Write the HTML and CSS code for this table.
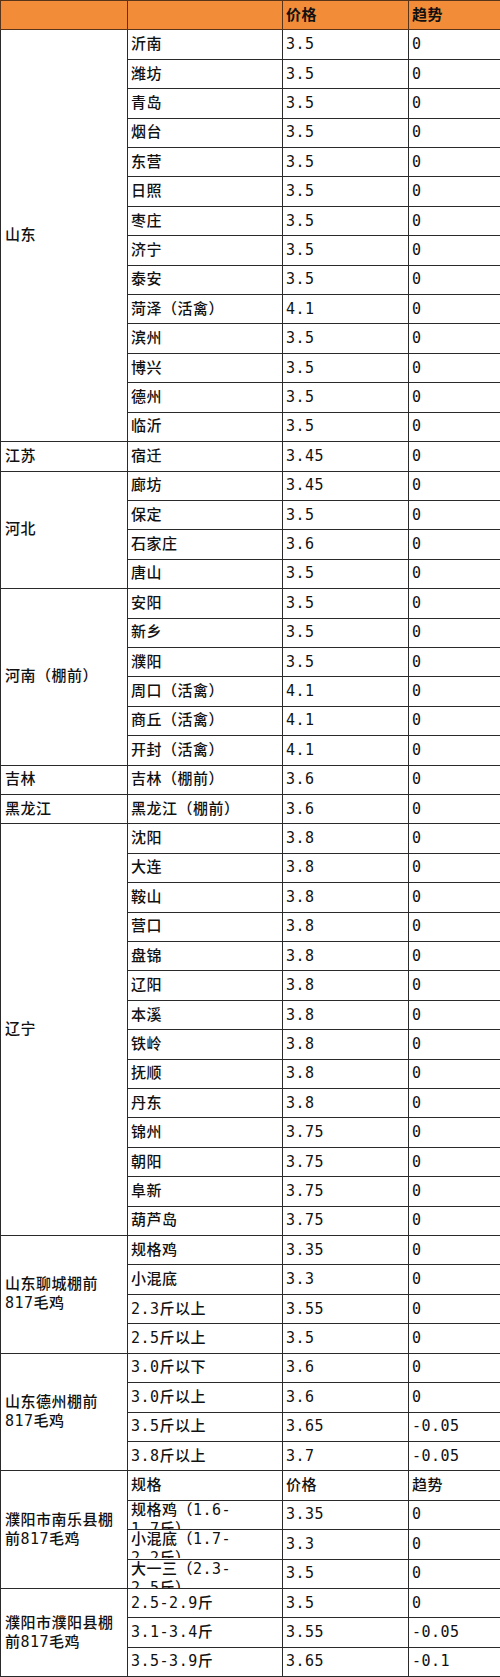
FILE: index.html
```html
<!DOCTYPE html>
<html lang="zh">
<head>
<meta charset="utf-8">
<title>毛鸡价格</title>
<link rel="stylesheet" href="styles.css">
</head>
<body>
<table class="price-table">
  <colgroup>
    <col class="c-region">
    <col class="c-place">
    <col class="c-price">
    <col class="c-trend">
  </colgroup>
  <thead>
    <tr class="head"><th></th><th></th><th>价格</th><th>趋势</th></tr>
  </thead>
  <tbody>
    <tr><td rowspan="14" class="region">山东</td><td>沂南</td><td>3.5</td><td>0</td></tr>
    <tr><td>潍坊</td><td>3.5</td><td>0</td></tr>
    <tr><td>青岛</td><td>3.5</td><td>0</td></tr>
    <tr><td>烟台</td><td>3.5</td><td>0</td></tr>
    <tr><td>东营</td><td>3.5</td><td>0</td></tr>
    <tr><td>日照</td><td>3.5</td><td>0</td></tr>
    <tr><td>枣庄</td><td>3.5</td><td>0</td></tr>
    <tr><td>济宁</td><td>3.5</td><td>0</td></tr>
    <tr><td>泰安</td><td>3.5</td><td>0</td></tr>
    <tr><td>菏泽（活禽）</td><td>4.1</td><td>0</td></tr>
    <tr><td>滨州</td><td>3.5</td><td>0</td></tr>
    <tr><td>博兴</td><td>3.5</td><td>0</td></tr>
    <tr><td>德州</td><td>3.5</td><td>0</td></tr>
    <tr><td>临沂</td><td>3.5</td><td>0</td></tr>

    <tr><td class="region">江苏</td><td>宿迁</td><td>3.45</td><td>0</td></tr>

    <tr><td rowspan="4" class="region">河北</td><td>廊坊</td><td>3.45</td><td>0</td></tr>
    <tr><td>保定</td><td>3.5</td><td>0</td></tr>
    <tr><td>石家庄</td><td>3.6</td><td>0</td></tr>
    <tr><td>唐山</td><td>3.5</td><td>0</td></tr>

    <tr><td rowspan="6" class="region">河南（棚前）</td><td>安阳</td><td>3.5</td><td>0</td></tr>
    <tr><td>新乡</td><td>3.5</td><td>0</td></tr>
    <tr><td>濮阳</td><td>3.5</td><td>0</td></tr>
    <tr><td>周口（活禽）</td><td>4.1</td><td>0</td></tr>
    <tr><td>商丘（活禽）</td><td>4.1</td><td>0</td></tr>
    <tr><td>开封（活禽）</td><td>4.1</td><td>0</td></tr>

    <tr><td class="region">吉林</td><td>吉林（棚前）</td><td>3.6</td><td>0</td></tr>
    <tr><td class="region">黑龙江</td><td>黑龙江（棚前）</td><td>3.6</td><td>0</td></tr>

    <tr><td rowspan="14" class="region">辽宁</td><td>沈阳</td><td>3.8</td><td>0</td></tr>
    <tr><td>大连</td><td>3.8</td><td>0</td></tr>
    <tr><td>鞍山</td><td>3.8</td><td>0</td></tr>
    <tr><td>营口</td><td>3.8</td><td>0</td></tr>
    <tr><td>盘锦</td><td>3.8</td><td>0</td></tr>
    <tr><td>辽阳</td><td>3.8</td><td>0</td></tr>
    <tr><td>本溪</td><td>3.8</td><td>0</td></tr>
    <tr><td>铁岭</td><td>3.8</td><td>0</td></tr>
    <tr><td>抚顺</td><td>3.8</td><td>0</td></tr>
    <tr><td>丹东</td><td>3.8</td><td>0</td></tr>
    <tr><td>锦州</td><td>3.75</td><td>0</td></tr>
    <tr><td>朝阳</td><td>3.75</td><td>0</td></tr>
    <tr><td>阜新</td><td>3.75</td><td>0</td></tr>
    <tr><td>葫芦岛</td><td>3.75</td><td>0</td></tr>

    <tr><td rowspan="4" class="region">山东聊城棚前<br>817毛鸡</td><td>规格鸡</td><td>3.35</td><td>0</td></tr>
    <tr><td>小混底</td><td>3.3</td><td>0</td></tr>
    <tr><td>2.3斤以上</td><td>3.55</td><td>0</td></tr>
    <tr><td>2.5斤以上</td><td>3.5</td><td>0</td></tr>

    <tr><td rowspan="4" class="region">山东德州棚前<br>817毛鸡</td><td>3.0斤以下</td><td>3.6</td><td>0</td></tr>
    <tr><td>3.0斤以上</td><td>3.6</td><td>0</td></tr>
    <tr><td>3.5斤以上</td><td>3.65</td><td>-0.05</td></tr>
    <tr><td>3.8斤以上</td><td>3.7</td><td>-0.05</td></tr>

    <tr><td rowspan="4" class="region">濮阳市南乐县棚<br>前817毛鸡</td><td>规格</td><td>价格</td><td>趋势</td></tr>
    <tr><td><div class="clip">规格鸡（1.6-<br>1.7斤）</div></td><td>3.35</td><td>0</td></tr>
    <tr><td><div class="clip">小混底（1.7-<br>2.2斤）</div></td><td>3.3</td><td>0</td></tr>
    <tr><td><div class="clip">大一三（2.3-<br>2.5斤）</div></td><td>3.5</td><td>0</td></tr>

    <tr><td rowspan="3" class="region">濮阳市濮阳县棚<br>前817毛鸡</td><td>2.5-2.9斤</td><td>3.5</td><td>0</td></tr>
    <tr><td>3.1-3.4斤</td><td>3.55</td><td>-0.05</td></tr>
    <tr><td>3.5-3.9斤</td><td>3.65</td><td>-0.1</td></tr>
  </tbody>
</table>
</body>
</html>
```

FILE: styles.css
```css
html, body {
  margin: 0;
  padding: 0;
  background: #ffffff;
}

.price-table {
  width: 500px;
  border-collapse: collapse;
  table-layout: fixed;
  font-family: "DejaVu Sans Mono", "Noto Sans CJK SC", monospace;
  font-size: 15px;
  font-weight: 500;
  letter-spacing: 0.5px;
  color: #111;
}

.c-region { width: 127px; }
.c-place { width: 155px; }
.c-price { width: 126px; }
.c-trend { width: 92px; }

.price-table th,
.price-table td {
  border: 1px solid #2a2a2a;
  height: 28.42px;
  padding: 0 3px 0 3px;
  line-height: 19px;
  text-align: left;
  vertical-align: middle;
  white-space: normal;
}

.price-table .head th {
  background: #f38c38;
  font-weight: bold;
  border-color: #5a3418;
}

.price-table td.region {
  padding-left: 4px;
}

.clip {
  height: 28px;
  overflow: hidden;
}
```
